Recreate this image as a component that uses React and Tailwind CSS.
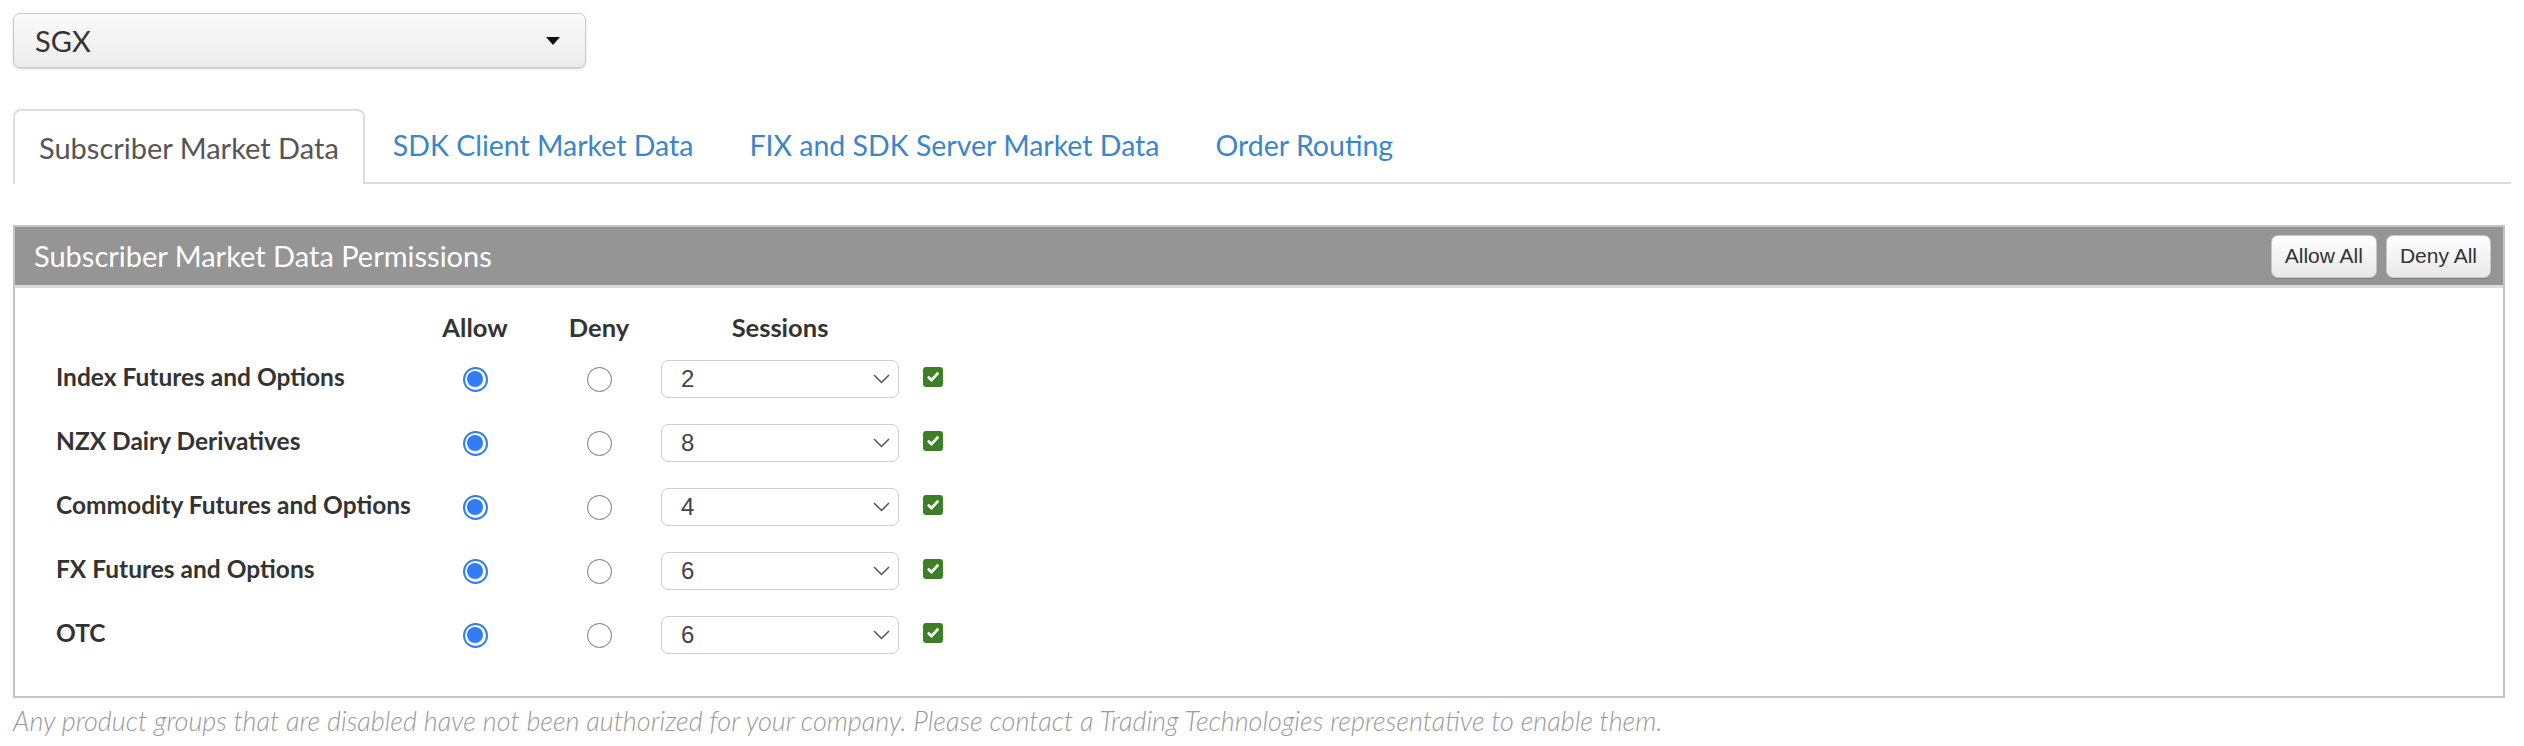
import React, { useState } from 'react';

const TABS = ['Subscriber Market Data', 'SDK Client Market Data', 'FIX and SDK Server Market Data', 'Order Routing'];

const GROUPS = [
  { name: 'Index Futures and Options', sessions: '2' },
  { name: 'NZX Dairy Derivatives', sessions: '8' },
  { name: 'Commodity Futures and Options', sessions: '4' },
  { name: 'FX Futures and Options', sessions: '6' },
  { name: 'OTC', sessions: '6' },
];

const Radio = ({ checked, onClick }) => (
  <button
    onClick={onClick}
    className={
      checked
        ? 'w-[25px] h-[25px] rounded-full border-[2px] border-[#2f7cf6] bg-white flex items-center justify-center'
        : 'w-[25px] h-[25px] rounded-full border-[1.5px] border-[#767676] bg-white'
    }
  >
    {checked && <span className="w-[16px] h-[16px] rounded-full bg-[#2f7cf6]" />}
  </button>
);

const Checkbox = ({ checked, onClick }) => (
  <button
    onClick={onClick}
    className={
      checked
        ? 'w-[20px] h-[20px] rounded-[3px] bg-[#3d7e27] flex items-center justify-center -mt-[5px]'
        : 'w-[20px] h-[20px] rounded-[3px] border border-[#767676] bg-white -mt-[5px]'
    }
  >
    {checked && (
      <svg width="14" height="14" viewBox="0 0 14 14">
        <path d="M2.8 7.4 L5.6 10.2 L11.4 3.6" fill="none" stroke="white" strokeWidth="2.8" strokeLinecap="round" strokeLinejoin="round" />
      </svg>
    )}
  </button>
);

const SessionSelect = ({ value }) => (
  <div className="w-[238px] h-[38px] border-[1.5px] border-[#cfcfcf] rounded-[7px] bg-white flex items-center justify-between pl-[19px] pr-[8px] font-['Liberation_Sans',sans-serif] text-[24px] text-[#444]">
    <span>{value}</span>
    <svg width="17" height="10" viewBox="0 0 17 10">
      <path d="M1 1 L8.5 8.5 L16 1" fill="none" stroke="#555" strokeWidth="1.5" />
    </svg>
  </div>
);

const HeaderButton = ({ children }) => (
  <button className="h-[43px] px-[13px] rounded-[7px] border border-[#c7c7c7] bg-gradient-to-b from-white to-[#e8e8e8] shadow-[0_1px_1px_rgba(0,0,0,0.15)] font-['Liberation_Sans',sans-serif] text-[21px] text-[#333]">
    {children}
  </button>
);

export default function App() {
  const [activeTab, setActiveTab] = useState(0);
  const [perms, setPerms] = useState(GROUPS.map(() => ({ allow: true, enabled: true })));

  const setAllow = (idx, allow) =>
    setPerms(perms.map((p, i) => (i === idx ? { ...p, allow } : p)));
  const toggleEnabled = (idx) =>
    setPerms(perms.map((p, i) => (i === idx ? { ...p, enabled: !p.enabled } : p)));

  return (
    <div className="bg-white min-h-[746px] px-[13px] pt-[13px] font-['Lato',sans-serif] text-[#333]">
      {/* Exchange picker */}
      <div className="w-[573px] h-[55px] rounded-[7px] border border-[#c9c9c9] bg-gradient-to-b from-[#fafafa] to-[#ececec] shadow-[0_1px_2px_rgba(0,0,0,0.2)] flex items-center justify-between pl-[21px] pr-[25px]">
        <span className="text-[29px] text-[#333]">SGX</span>
        <svg width="14" height="8" viewBox="0 0 14 8">
          <path d="M0 0 L14 0 L7 8 Z" fill="#111" />
        </svg>
      </div>

      {/* Tabs */}
      <div className="mt-[41px] flex border-b-2 border-[#dddddd] h-[75px]">
        {TABS.map((tab, i) => (
          <button
            key={tab}
            onClick={() => setActiveTab(i)}
            className={
              i === activeTab
                ? 'h-[75px] px-[24px] border-2 border-b-0 border-[#dddddd] rounded-t-[8px] bg-white text-[#555] text-[29px] -mb-[2px]'
                : 'h-[73px] px-[28px] text-[#3a86c8] text-[28.5px]'
            }
          >
            {tab}
          </button>
        ))}
      </div>

      {/* Permissions panel */}
      <div className="mt-[41px] w-[2492px] border-2 border-[#c4c4c4]">
        <div className="h-[61px] bg-[#959595] border-b-[3px] border-[#dcdcdc] flex items-center justify-between pl-[19px] pr-[12px]">
          <span className="text-[29px] text-white">Subscriber Market Data Permissions</span>
          <div className="flex gap-[9px]">
            <HeaderButton>Allow All</HeaderButton>
            <HeaderButton>Deny All</HeaderButton>
          </div>
        </div>

        <div className="pl-[41px] pt-[19px] pb-[29px]">
          <div className="grid grid-cols-[357px_124px_124px_238px_44px] items-center">
            <div className="h-[40px]" />
            <div className="h-[40px] flex items-center justify-center font-bold text-[25.5px]">Allow</div>
            <div className="h-[40px] flex items-center justify-center font-bold text-[25.5px]">Deny</div>
            <div className="h-[40px] flex items-center justify-center font-bold text-[25.5px]">Sessions</div>
            <div className="h-[40px]" />

            {GROUPS.map((g, i) => (
              <React.Fragment key={g.name}>
                <div className="h-[64px] flex items-center font-bold text-[24.5px] -mt-[4px] whitespace-nowrap">{g.name}</div>
                <div className="h-[64px] flex items-center justify-center">
                  <Radio checked={perms[i].allow} onClick={() => setAllow(i, true)} />
                </div>
                <div className="h-[64px] flex items-center justify-center">
                  <Radio checked={!perms[i].allow} onClick={() => setAllow(i, false)} />
                </div>
                <div className="h-[64px] flex items-center">
                  <SessionSelect value={g.sessions} />
                </div>
                <div className="h-[64px] flex items-center justify-end">
                  <Checkbox checked={perms[i].enabled} onClick={() => toggleEnabled(i)} />
                </div>
              </React.Fragment>
            ))}
          </div>
        </div>
      </div>

      <p className="mt-[3px] italic font-light text-[27px] text-[#9a9a9a] whitespace-nowrap">
        Any product groups that are disabled have not been authorized for your company. Please contact a Trading Technologies representative to enable them.
      </p>
    </div>
  );
}
